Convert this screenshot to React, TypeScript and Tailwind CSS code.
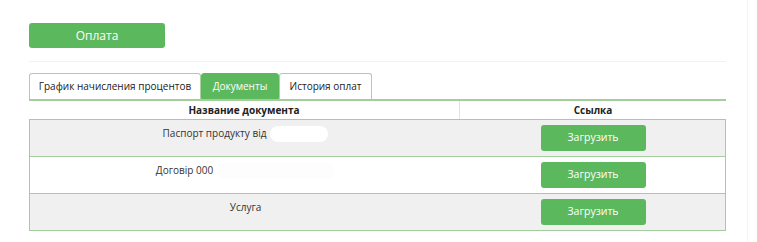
import React from "react";

const rows = [
  { name: "Паспорт продукту від", blot: "w-[58px] bg-white", shaded: true },
  { name: "Договір 000", blot: "w-[118px] bg-[#fdfdfd]", shaded: false },
  { name: "Услуга", blot: "", shaded: true },
];

const tabs = [
  { label: "График начисления процентов", active: false, w: "w-[172px]" },
  { label: "Документы", active: true, w: "w-[78px]" },
  { label: "История оплат", active: false, w: "w-[93px]" },
];

export default function App() {
  return (
    <div className="relative h-[242px] w-[757px] bg-white font-['Open_Sans',sans-serif] text-[#333]">
      <div className="absolute right-[9px] top-0 h-full w-px bg-[#f4f4f4]" />
      <div className="ml-[29px] w-[697px] pt-[23px]">
        <button className="block h-[25px] w-[136px] rounded-[3px] bg-[#5cb85c] text-[12px] text-white">
          Оплата
        </button>
        <div className="mt-[13px] h-px w-full bg-[#f2f2f2]" />

        <div className="mt-[11px] flex h-[26px]">
          {tabs.map((t) => (
            <div
              key={t.label}
              className={`flex items-center justify-center rounded-t-[3px] text-[10px] ${t.w} ${
                t.active
                  ? "border border-[#5cb85c] bg-[#5cb85c] text-white"
                  : "border border-b-0 border-[#a8d3a1] bg-white text-[#222]"
              }`}
            >
              {t.label}
            </div>
          ))}
        </div>

        <div className="border-t-2 border-[#a3cd9c]">
          <div className="flex h-[19px] border-b border-[#a3cd9c] text-[10px] font-bold text-[#222]">
            <div className="flex w-[431px] items-center justify-center border-r border-[#e2e2e2]">
              Название документа
            </div>
            <div className="flex flex-1 items-center justify-center">Ссылка</div>
          </div>
          {rows.map((r) => (
            <div
              key={r.name}
              className={`flex h-[37px] border-x border-b border-[#a3cd9c] text-[10px] ${
                r.shaded ? "bg-[#f0f0f0]" : "bg-white"
              }`}
            >
              <div className="flex w-[431px] items-start justify-center pt-[6px]">
                <span>{r.name}</span>
                {r.blot && (
                  <span className={`ml-[4px] h-[16px] rounded-full ${r.blot}`} />
                )}
              </div>
              <div className="flex flex-1 items-center justify-center">
                <button className="block h-[26px] w-[105px] rounded-[3px] bg-[#5cb85c] text-[10.5px] text-white">
                  Загрузить
                </button>
              </div>
            </div>
          ))}
        </div>
      </div>
    </div>
  );
}
